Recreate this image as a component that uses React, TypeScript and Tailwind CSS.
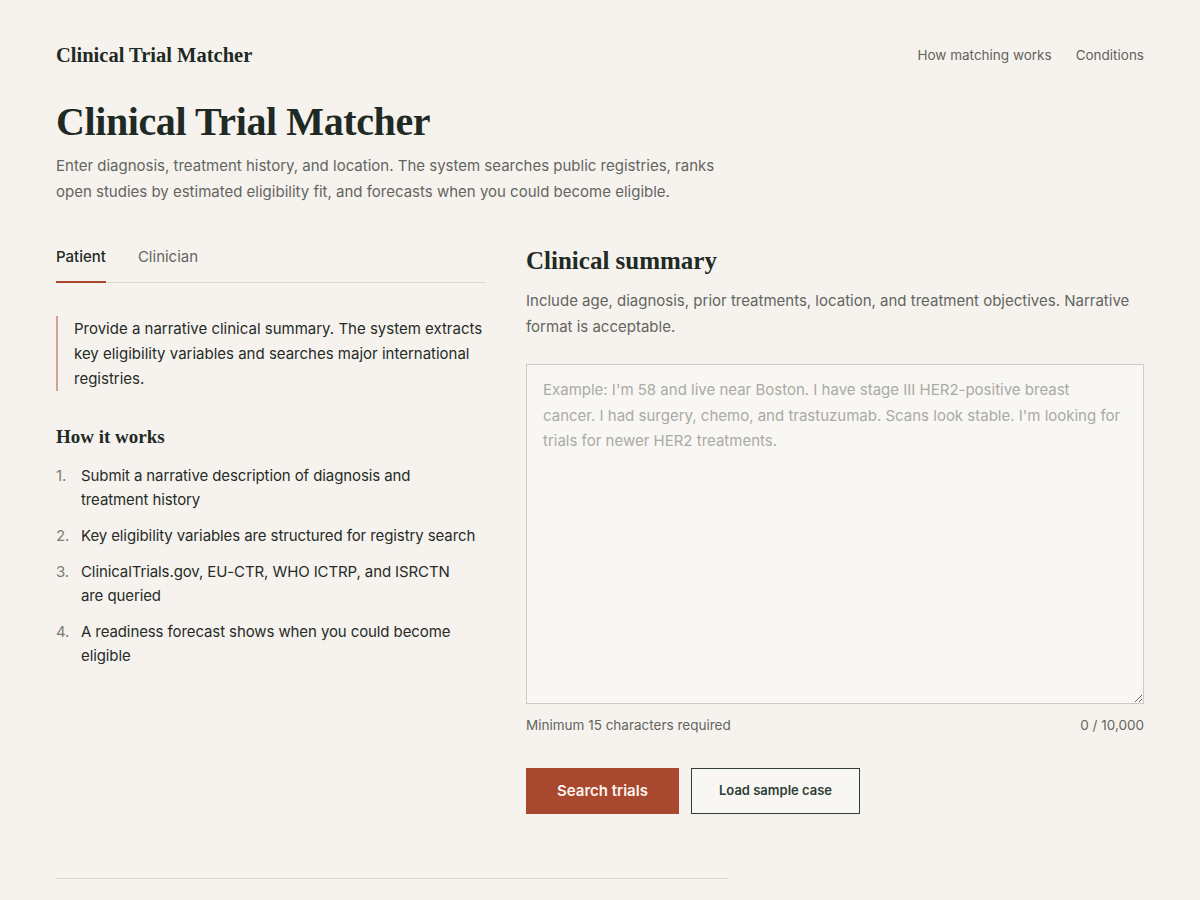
import React from "react";

export default function App() {
  const serif = { fontFamily: '"Liberation Serif", "DejaVu Serif", serif' };
  const steps = [
    "Submit a narrative description of diagnosis and\ntreatment history",
    "Key eligibility variables are structured for registry search",
    "ClinicalTrials.gov, EU-CTR, WHO ICTRP, and ISRCTN\nare queried",
    "A readiness forecast shows when you could become\neligible",
  ];
  return (
    <div
      className="min-h-[900px] bg-[#f6f3ee] text-[#1f2a24]"
      style={{ fontFamily: 'Inter, "Noto Sans", sans-serif' }}
    >
      <div className="mx-auto w-[1088px]">
        <header className="flex items-center justify-between pt-[42px] h-[68px]">
          <div className="text-[20.5px] font-bold" style={serif}>
            Clinical Trial Matcher
          </div>
          <nav className="flex gap-6 text-[13.5px] text-[#5f625d]">
            <span>How matching works</span>
            <span>Conditions</span>
          </nav>
        </header>

        <h1 className="mt-[30px] text-[40px] leading-[48px] font-bold tracking-[-0.4px]" style={serif}>
          Clinical Trial Matcher
        </h1>
        <p className="mt-[7px] w-[690px] text-[15px] leading-[26px] text-[#63655f]">
          Enter diagnosis, treatment history, and location. The system searches public registries, ranks open studies by estimated eligibility fit, and forecasts when you could become eligible.
        </p>

        <div className="mt-[40px] grid grid-cols-[430px_618px] gap-[40px]">
          <div>
            <div className="flex border-b border-[#dcd8d0] h-[38px] text-[15px] leading-[24px]">
              <div className="relative font-medium text-[#1f2a24]">
                Patient
                <span className="absolute left-0 right-0 bottom-[-1px] h-[2px] bg-[#a8482f]"></span>
              </div>
              <div className="ml-[32px] text-[#63655f]">Clinician</div>
            </div>

            <div className="mt-[33px] border-l-2 border-[#d4a097] pl-[16px] text-[15px] leading-[25px] text-[#262b27]">
              Provide a narrative clinical summary. The system extracts key eligibility variables and searches major international registries.
            </div>

            <h3 className="mt-[34px] text-[19px] font-bold leading-[24px]" style={serif}>
              How it works
            </h3>

            <ol className="mt-[15px] flex flex-col gap-[12px] text-[15px] leading-[24px] text-[#262b27] tracking-[-0.1px]">
              {steps.map((s, i) => (
                <li key={i} className="flex">
                  <span className="w-[25px] shrink-0 text-[#7a7c76]">{i + 1}.</span>
                  <span className="whitespace-pre-line">{s}</span>
                </li>
              ))}
            </ol>
          </div>

          <div>
            <h2 className="text-[25px] leading-[32px] font-bold" style={serif}>
              Clinical summary
            </h2>
            <p className="mt-[11px] text-[15px] leading-[26px] text-[#63655f]">
              Include age, diagnosis, prior treatments, location, and treatment objectives. Narrative format is acceptable.
            </p>
            <textarea
              className="mt-[24px] block w-full h-[340px] resize-y border border-[#cfcbc3] bg-[#f9f7f3] pl-[16px] pr-[20px] py-[12px] text-[15px] leading-[25.5px] text-[#262b27] placeholder:text-[#a9aaa4] outline-none"
              placeholder="Example: I'm 58 and live near Boston. I have stage III HER2-positive breast cancer. I had surgery, chemo, and trastuzumab. Scans look stable. I'm looking for trials for newer HER2 treatments."
            />
            <div className="mt-[12px] flex justify-between text-[13.5px] leading-[18px] text-[#63655f]">
              <span>Minimum 15 characters required</span>
              <span>0 / 10,000</span>
            </div>
            <div className="mt-[34px] flex gap-[12px]">
              <button className="h-[46px] w-[153px] bg-[#a8482f] text-[#fbf3ee] text-[15px] font-semibold">
                Search trials
              </button>
              <button className="h-[46px] w-[169px] border border-[#2f3d36] bg-[#f9f7f3] text-[#2f3d36] text-[13px] font-semibold">
                Load sample case
              </button>
            </div>
          </div>
        </div>

        <div className="mt-[64px] w-[672px] border-t border-[#dcd8d0]"></div>
      </div>
    </div>
  );
}
